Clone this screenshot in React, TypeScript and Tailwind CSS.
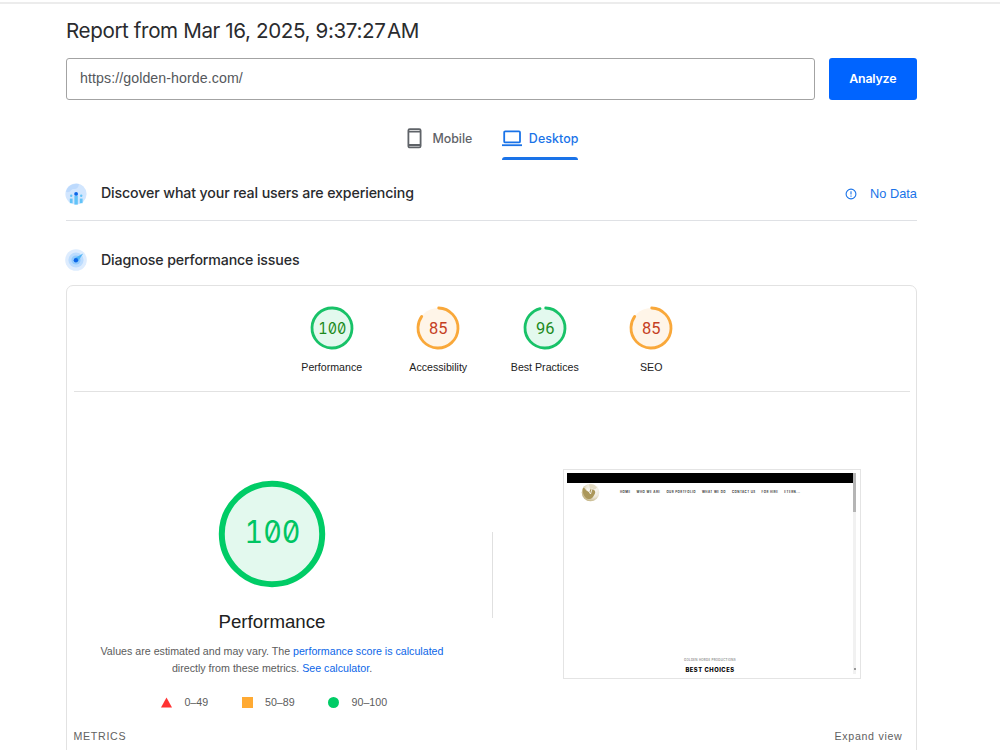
import { clsx } from "clsx";

type Score = {
  label: string;
  value: number;
};

const scores: Score[] = [
  { label: "Performance", value: 100 },
  { label: "Accessibility", value: 85 },
  { label: "Best Practices", value: 96 },
  { label: "SEO", value: 85 },
];

const siteLinks = ["HOME", "WHO WE ARE", "OUR PORTFOLIO", "WHAT WE DO", "CONTACT US", "FOR HIRE", "ETERN..."];

function Gauge({ score }: { score: Score }) {
  const good = score.value >= 90;
  const length = 2 * Math.PI * 20;
  const filled = score.value === 100 ? length : (score.value / 100) * length - 1.5;

  return (
    <div className="flex w-[106.5px] flex-col items-center">
      <svg width="44" height="44" viewBox="0 0 44 44">
        <circle cx="22" cy="22" r="20" fill={good ? "#e3f9ee" : "#fff5e8"} />
        <circle
          cx="22"
          cy="22"
          r="20"
          fill="none"
          stroke={good ? "#18c268" : "#f9a83a"}
          strokeWidth="2.8"
          strokeLinecap="round"
          strokeDasharray={`${filled} ${length}`}
          transform="rotate(-88 22 22)"
        />
        <text
          x="22.3"
          y="27.8"
          textAnchor="middle"
          textLength={score.value === 100 ? 28 : 18.5}
          lengthAdjust="spacingAndGlyphs"
          fill={good ? "#1c8a1c" : "#c5401f"}
          className={clsx("text-[15.6px]", score.value === 100 ? "font-[Inter] [font-feature-settings:'zero','tnum']" : "font-[Roboto]")}
        >
          {score.value}
        </text>
      </svg>
      <span className="mt-[9px] text-[10.64px] leading-4 text-[#212121]">{score.label}</span>
    </div>
  );
}

function UsersIcon() {
  return (
    <svg width="22" height="22" viewBox="0 0 22 22" className="-ml-px">
      <circle cx="11" cy="11" r="10.6" fill="#d2e6fe" />
      <path d="M1 9a10.6 10.6 0 0 1 13-8c-1 5-3 5-6 5-2 0-2 4-7 3z" fill="#bddafd" />
      <g fill="#62c3f8">
        <rect x="9.4" y="13" width="3.4" height="8.6" />
        <rect x="4.8" y="15.6" width="2.8" height="4.6" />
        <rect x="14.8" y="15.6" width="2.8" height="4.6" />
        <circle cx="6.2" cy="12.8" r="1.2" />
        <circle cx="16.2" cy="12.8" r="1.2" />
      </g>
      <circle cx="11.1" cy="10.9" r="1.9" fill="#0b66e8" />
    </svg>
  );
}

function RadarIcon() {
  return (
    <svg width="22" height="22" viewBox="0 0 22 22" className="-ml-px">
      <circle cx="11" cy="11" r="10.8" fill="#ddecfe" />
      <circle cx="11" cy="11" r="7.6" fill="#bcdcfe" />
      <circle cx="11" cy="11" r="4.6" fill="#93cbfd" />
      <path d="M10 9 18.2 4.4 13 12.6z" fill="#4fb5f6" />
      <circle cx="10.9" cy="11.2" r="2.2" fill="#0b66e8" />
    </svg>
  );
}

function SitePreview() {
  return (
    <div className="flex h-[210px] w-[298px] flex-col border border-[#e4e4e4] bg-white p-[3.4px]">
      <div className="flex flex-1">
        <div className="flex flex-1 flex-col">
          <div className="h-2.5 bg-black" />
          <div className="flex h-5 items-start pl-[14px]">
            <svg width="19" height="19" viewBox="0 0 19 19">
              <defs>
                <radialGradient id="globe" cx="0.65" cy="0.35" r="0.75">
                  <stop offset="0" stopColor="#ffffff" />
                  <stop offset="0.55" stopColor="#ece7d8" />
                  <stop offset="1" stopColor="#b9a76f" />
                </radialGradient>
              </defs>
              <circle cx="9.5" cy="9.5" r="8.8" fill="url(#globe)" />
              <path d="M2 5c2-1 2 2 4 3s3 1 3-1 4-1 5 1-1 4-2 6-5 3-7 1-4-5-3-10z" fill="#ab975a" />
              <path d="M8 1.5c3-1 6 0 8 3l-2 2-3-1-2 1z" fill="#e3dbc2" />
              <path d="M6 5.5 9.5 11 11 6" fill="none" stroke="#fff" strokeWidth="0.8" />
            </svg>
            <nav className="ml-5 mt-[8.5px] flex gap-[5.9px] whitespace-nowrap font-[Inter] text-[2.9px] font-bold leading-none tracking-[0.47px] text-[#333]">
              {siteLinks.map((link) => (
                <span key={link}>{link}</span>
              ))}
            </nav>
          </div>
          <div className="mt-auto flex flex-col items-center">
            <span className="font-[Inter] text-[2.9px] leading-[4px] tracking-[0.3px] text-[#555]">GOLDEN HORDE PRODUCTIONS</span>
            <span className="mt-[4px] font-[Inter] text-[5.8px] font-extrabold leading-[8px] tracking-[0.52px] text-black">BEST CHOICES</span>
          </div>
        </div>
        <div className="flex w-[3px] flex-col items-center justify-between bg-[#f1f1f1]">
          <div className="h-[39px] w-full bg-[#b5b5b5]" />
          <div className="mb-1 size-[2px] bg-[#999]" />
        </div>
      </div>
    </div>
  );
}

export default function App() {
  return (
    <div className="h-[750px] overflow-hidden bg-white pt-0.5 font-['Liberation_Sans',sans-serif]">
      <div className="h-0.5 bg-[#ececec]" />
      <main className="ml-[66px] flex w-[851px] flex-col">
        <h1 className="mt-[13px] h-7 whitespace-nowrap font-[Inter] text-[20.6px] leading-7 tracking-[-0.38px] text-[#2a2b2e]">
          Report from Mar 16, 2025, 9:37:27&#8202;AM
        </h1>

        <div className="mt-[13px] flex gap-[14px]">
          <div className="flex h-[42px] flex-1 items-center rounded-[3px] border border-[#a3a3a3] pl-[13px] text-[14.2px] tracking-[0.08px] text-[#55585c]">
            https://golden-horde.com/
          </div>
          <button className="h-[42px] w-[88.5px] rounded-[3px] bg-[#0064ff] font-[Inter] text-[12.4px] font-semibold tracking-[-0.2px] text-white">
            Analyze
          </button>
        </div>

        <div className="mt-5 flex h-10 justify-center gap-[29.5px] pl-[3px] font-[Inter] text-[12.4px] font-medium">
          <div className="flex items-start gap-[10px] text-[#5f6368]">
            <svg width="15" height="21" viewBox="0 0 15 21" className="mt-2">
              <rect x="1.4" y="1.2" width="12.2" height="18.2" rx="1.4" fill="none" stroke="#5f6368" strokeWidth="1.8" />
              <path d="M1 3.6h13M1 17h13" stroke="#5f6368" strokeWidth="1.8" />
            </svg>
            <span className="leading-[37px]">Mobile</span>
          </div>
          <div className="flex flex-col justify-between text-[#1a73e8]">
            <div className="flex items-start gap-[7px]">
              <svg width="20" height="17" viewBox="0 0 20 17" className="mt-[10px]">
                <rect x="2.2" y="1.4" width="15.8" height="11" rx="1" fill="none" stroke="#1a73e8" strokeWidth="1.8" />
                <path d="M0 15.2h20" stroke="#1a73e8" strokeWidth="1.8" />
              </svg>
              <span className="h-[36px] leading-[37px] tracking-[0.1px]">Desktop</span>
            </div>
            <div className="h-[3px] w-[76px] rounded-t-sm bg-[#1a73e8]" />
          </div>
        </div>

        <section className="flex h-[61px] items-center border-b border-[#dfe1e5] pt-[7px]">
          <UsersIcon />
          <h2 className="-mt-px ml-[14px] font-[Inter] text-[14.2px] font-medium tracking-[-0.13px] text-[#2a2b2e]">
            Discover what your real users are experiencing
          </h2>
          <svg width="12" height="12" viewBox="0 0 12 12" className="ml-auto">
            <circle cx="6" cy="6" r="4.9" fill="none" stroke="#1a73e8" strokeWidth="1.1" />
            <path d="M6 3.2v3.4M6 7.6v1.2" stroke="#1a73e8" strokeWidth="1.1" />
          </svg>
          <span className="ml-[13.5px] text-[12.8px] leading-5 text-[#1a73e8]">No Data</span>
        </section>

        <section className="flex h-[64px] items-center pt-[13px]">
          <RadarIcon />
          <h2 className="ml-[14px] font-[Inter] text-[14.2px] font-medium tracking-[-0.15px] text-[#2a2b2e]">
            Diagnose performance issues
          </h2>
        </section>

        <section className="h-[480px] rounded-t-[7px] border border-[#e2e2e2] px-[6.5px]">
          <div className="flex h-[105.5px] justify-center border-b border-[#e2e2e2] pt-5">
            {scores.map((score) => (
              <Gauge key={score.label} score={score} />
            ))}
          </div>

          <div className="flex h-[337.5px] text-[10.66px] text-[#5c5c5c]">
            <div className="flex w-[397px] flex-col items-center pt-[88px]">
              <svg width="108" height="108" viewBox="0 0 108 108">
                <circle cx="54" cy="54" r="50.2" fill="#e3f9ee" stroke="#00cc66" strokeWidth="6" />
                <text
                  x="54.5"
                  y="62.5"
                  textAnchor="middle"
                  textLength="56"
                  lengthAdjust="spacingAndGlyphs"
                  fill="#00c563"
                  className="font-[Inter] text-[30.5px] [font-feature-settings:'zero','tnum']"
                >
                  100
                </text>
              </svg>
              <h3 className="mt-[20px] text-[18.7px] leading-7 text-[#212121]">Performance</h3>
              <p className="mt-[7px] text-center leading-[17.7px]">
                Values are estimated and may vary. The <a className="text-[#0b66e8]">performance score is calculated</a>
                <br />
                directly from these metrics. <a className="text-[#0b66e8]">See calculator</a>.
              </p>
              <div className="mt-[17px] flex h-4 items-center pl-1">
                <svg width="11" height="11" viewBox="0 0 11 11">
                  <path d="M5.5 0.4 11 10.6H0z" fill="#f33" />
                </svg>
                <span className="ml-[12.5px]">0–49</span>
                <span className="ml-[33.4px] size-[11px] bg-[#fa3]" />
                <span className="ml-[12.5px]">50–89</span>
                <span className="ml-[33.4px] size-[11px] rounded-full bg-[#0c6]" />
                <span className="ml-[12.5px]">90–100</span>
              </div>
            </div>
            <div className="mt-[140px] ml-[21px] h-[86px] w-px shrink-0 self-start bg-[#e0e0e0]" />
            <div className="mt-[77px] ml-[70px]">
              <SitePreview />
            </div>
          </div>

          <div className="flex h-4 items-center justify-between pr-[7px] text-[10.64px] tracking-[0.71px] text-[#616161]">
            <span>METRICS</span>
            <span>Expand view</span>
          </div>
        </section>
      </main>
    </div>
  );
}
